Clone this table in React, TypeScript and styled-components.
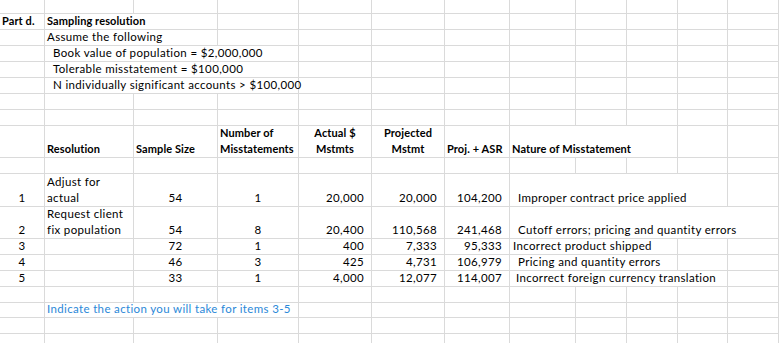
import styled, { createGlobalStyle } from 'styled-components'

const GlobalStyle = createGlobalStyle`
  html, body {
    margin: 0;
    padding: 0;
    background: #fff;
    overflow: hidden;
  }
`

// column widths include the 1px gridline on the right edge
const colWidths = [45, 89, 84, 81, 73, 73, 65, 66, 51, 51, 50, 51]
// row heights include the 1px gridline on the bottom edge
const rowHeights = [14, 16, 16, 16, 16, 16, 16, 16, 32, 16, 33, 32, 16, 16, 16, 16, 15, 16, 10]

type Align = 'left' | 'center' | 'right'

type CellDef = {
  t?: string | string[]
  span?: number
  align?: Align
  bold?: boolean
  pad?: number
  blue?: boolean
}

const c = (t: string): CellDef => ({ t, align: 'center' })
const r = (t: string): CellDef => ({ t, align: 'right' })

const rows: CellDef[][] = [
  [],
  [{ t: 'Part d.', bold: true }, { t: 'Sampling resolution', bold: true, span: 2 }],
  [{}, { t: 'Assume the following', span: 2 }],
  [{}, { t: 'Book value of population = $2,000,000', span: 3, pad: 8 }],
  [{}, { t: 'Tolerable misstatement = $100,000', span: 3, pad: 8 }],
  [{}, { t: 'N individually significant accounts > $100,000', span: 3, pad: 8 }],
  [],
  [],
  [
    {},
    { t: 'Resolution', bold: true },
    { t: 'Sample Size', bold: true },
    { t: ['Number of', 'Misstatements'], bold: true },
    { t: ['Actual $', 'Mstmts'], bold: true, align: 'center' },
    { t: ['Projected', 'Mstmt'], bold: true, align: 'center' },
    { t: 'Proj. + ASR', bold: true },
    { t: 'Nature of Misstatement', bold: true, span: 3 },
  ],
  [],
  [
    c('1'),
    { t: ['Adjust for', 'actual'] },
    c('54'),
    c('1'),
    r('20,000'),
    r('20,000'),
    r('104,200'),
    { t: 'Improper contract price applied', span: 4, pad: 8 },
  ],
  [
    c('2'),
    { t: ['Request client', 'fix population'] },
    c('54'),
    c('8'),
    r('20,400'),
    r('110,568'),
    r('241,468'),
    { t: 'Cutoff errors; pricing and quantity errors', span: 5, pad: 8 },
  ],
  [c('3'), {}, c('72'), c('1'), r('400'), r('7,333'), r('95,333'), { t: 'Incorrect product shipped', span: 3, pad: 3 }],
  [c('4'), {}, c('46'), c('3'), r('425'), r('4,731'), r('106,979'), { t: 'Pricing and quantity errors', span: 3, pad: 8 }],
  [c('5'), {}, c('33'), c('1'), r('4,000'), r('12,077'), r('114,007'), { t: 'Incorrect foreign currency translation', span: 4, pad: 6 }],
  [],
  [{}, { t: 'Indicate the action you will take for items 3-5', span: 3, blue: true }],
  [],
  [],
]

const Sheet = styled.div`
  display: grid;
  grid-template-columns: ${colWidths.map((w) => `${w}px`).join(' ')};
  grid-template-rows: ${rowHeights.map((h) => `${h}px`).join(' ')};
  width: 779px;
  height: 343px;
  overflow: hidden;
  background: #fff;
  font-family: Lato, 'Liberation Sans', sans-serif;
  color: #000;
`

const Cell = styled.div<{ $span: number; $align: Align; $bold?: boolean; $pad: number; $blue?: boolean }>`
  grid-column: span ${(p) => p.$span};
  box-sizing: border-box;
  min-width: 0;
  display: flex;
  flex-direction: column;
  justify-content: flex-end;
  padding: 0 ${(p) => (p.$align === 'right' ? 7 : 0)}px 0 ${(p) => (p.$align === 'left' ? p.$pad : 0)}px;
  border-right: 1px solid #dadada;
  border-bottom: 1px solid #dadada;
  text-align: ${(p) => p.$align};
  white-space: nowrap;
  line-height: 16px;
  font-size: ${(p) => (p.$bold ? 11 : 11.5)}px;
  letter-spacing: ${(p) => (p.$bold ? 0.1 : 0.35)}px;
  font-weight: ${(p) => (p.$bold ? 700 : 400)};
  color: ${(p) => (p.$blue ? '#2b88d8' : '#000')};
`

const Line = styled.span`
  display: block;
`

function fillRow(defs: CellDef[]): CellDef[] {
  const out = [...defs]
  let used = out.reduce((n, d) => n + (d.span ?? 1), 0)
  while (used < colWidths.length) {
    out.push({})
    used++
  }
  return out
}

export default function App() {
  return (
    <>
      <GlobalStyle />
      <Sheet>
        {rows.map((row, ri) =>
          fillRow(row).map((cell, ci) => {
            const lines = cell.t === undefined ? [] : Array.isArray(cell.t) ? cell.t : [cell.t]
            return (
              <Cell
                key={`${ri}-${ci}`}
                $span={cell.span ?? 1}
                $align={cell.align ?? 'left'}
                $bold={cell.bold}
                $pad={cell.pad ?? 2}
                $blue={cell.blue}
              >
                {lines.map((l, li) => (
                  <Line key={li}>{l}</Line>
                ))}
              </Cell>
            )
          }),
        )}
      </Sheet>
    </>
  )
}
